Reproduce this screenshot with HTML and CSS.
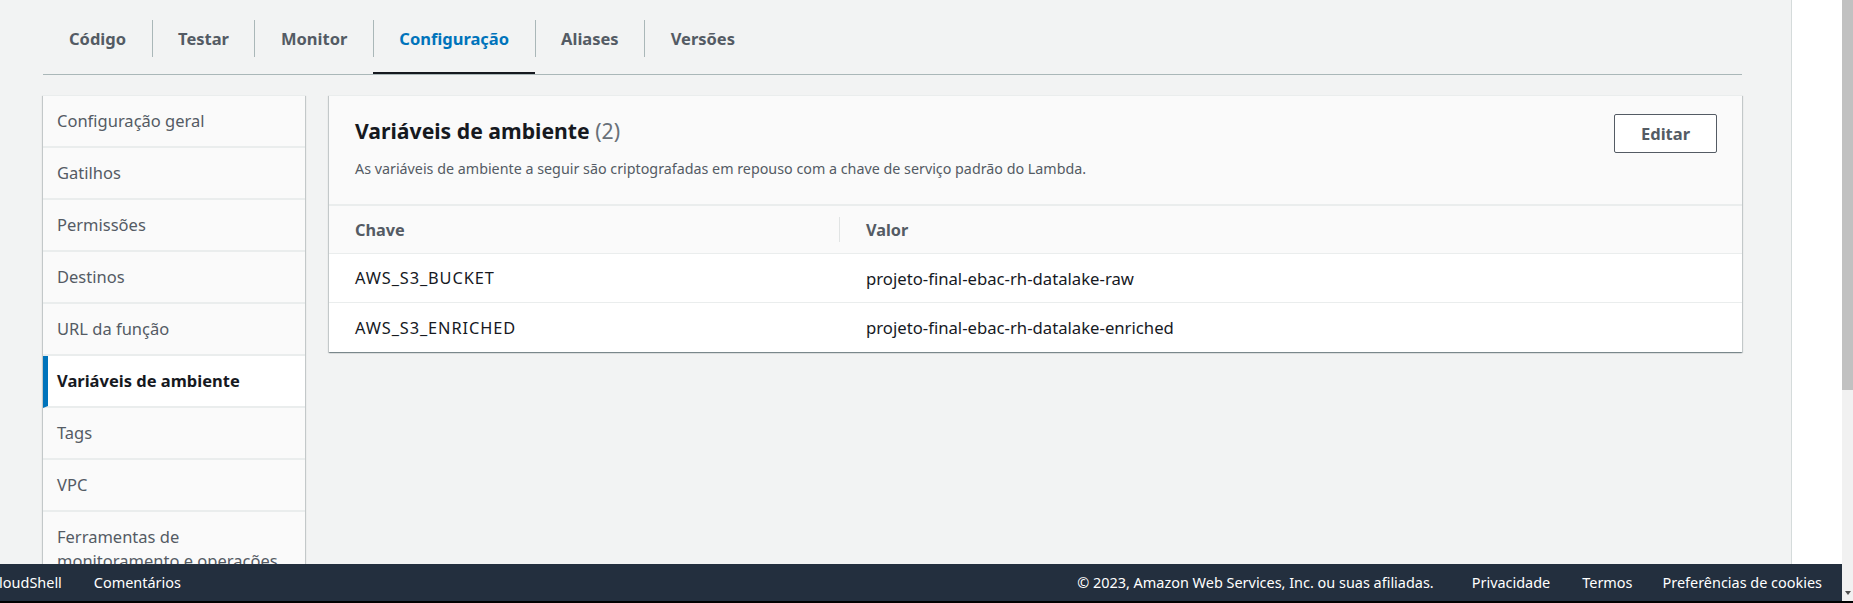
FILE: index.html
```html
<!DOCTYPE html>
<html lang="pt-BR">
<head>
<meta charset="utf-8">
<title>Lambda - Configuração</title>
<link rel="stylesheet" href="styles.css">
</head>
<body>
<div class="window">
  <div class="screen">
    <div class="viewport">
      <div class="main">
        <nav class="tabs">
          <div class="tab"><span class="tab-label">Código</span></div>
          <div class="tab"><span class="tab-label">Testar</span></div>
          <div class="tab"><span class="tab-label">Monitor</span></div>
          <div class="tab active"><span class="tab-label">Configuração</span></div>
          <div class="tab"><span class="tab-label">Aliases</span></div>
          <div class="tab"><span class="tab-label">Versões</span></div>
        </nav>
        <div class="content">
          <aside class="sidenav">
            <div class="nav-item">Configuração geral</div>
            <div class="nav-item">Gatilhos</div>
            <div class="nav-item">Permissões</div>
            <div class="nav-item">Destinos</div>
            <div class="nav-item">URL da função</div>
            <div class="nav-item active">Variáveis de ambiente</div>
            <div class="nav-item">Tags</div>
            <div class="nav-item">VPC</div>
            <div class="nav-item">Ferramentas de monitoramento e operações</div>
            <div class="nav-item">Simultaneidade</div>
          </aside>
          <section class="panel">
            <header class="panel-header">
              <div class="panel-heading">
                <h2 class="panel-title">Variáveis de ambiente <span class="count">(2)</span></h2>
                <p class="panel-desc">As variáveis de ambiente a seguir são criptografadas em repouso com a chave de serviço padrão do Lambda.</p>
              </div>
              <button class="btn" type="button">Editar</button>
            </header>
            <div class="table">
              <div class="th">Chave</div>
              <div class="th th-sep">Valor</div>
              <div class="td key">AWS_S3_BUCKET</div>
              <div class="td val">projeto-final-ebac-rh-datalake-raw</div>
              <div class="td key last">AWS_S3_ENRICHED</div>
              <div class="td val last">projeto-final-ebac-rh-datalake-enriched</div>
            </div>
          </section>
        </div>
      </div>
      <aside class="rail"></aside>
      <footer class="footer">
        <div class="footer-left">
          <span class="f-link cloudshell">CloudShell</span>
          <span class="f-link">Comentários</span>
        </div>
        <div class="footer-right">
          <span class="f-copy">© 2023, Amazon Web Services, Inc. ou suas afiliadas.</span>
          <span class="f-link">Privacidade</span>
          <span class="f-link">Termos</span>
          <span class="f-link f-cookies">Preferências de cookies</span>
        </div>
      </footer>
    </div>
    <div class="scrollbar">
      <div class="thumb"></div>
      <div class="track"><span class="arrow"></span></div>
    </div>
  </div>
  <div class="bottom-edge"></div>
</div>
</body>
</html>
```

FILE: styles.css
```css
* { box-sizing: border-box; }

html, body {
  margin: 0;
  padding: 0;
  width: 1853px;
  height: 603px;
  overflow: hidden;
}

body {
  font-family: "Noto Sans", "Open Sans", sans-serif;
  color: #16191f;
  background: #f2f3f3;
}

.window {
  display: flex;
  flex-direction: column;
  height: 603px;
}

.screen {
  display: flex;
  height: 601px;
}

.viewport {
  flex: 1;
  display: flex;
  position: relative;
  overflow: hidden;
  background: #f2f3f3;
}

.main {
  flex: 1;
  padding: 0 49px 0 43px;
}

/* Tabs */
.tabs {
  display: flex;
  border-bottom: 1px solid #aab7b8;
}

.tab {
  height: 74px;
  padding-top: 20px;
  font-size: 16.5px;
  font-weight: 700;
  color: #545b64;
}

.tab-label {
  display: flex;
  align-items: center;
  height: 37px;
  padding: 0 25.5px;
  border-left: 1px solid #aab7b8;
}

.tab:first-child .tab-label {
  border-left: none;
  padding-left: 26px;
}

.tab.active {
  color: #0073bb;
  border-bottom: 2px solid #16191f;
}

/* Content */
.content {
  display: flex;
  gap: 24px;
  margin-top: 20px;
  align-items: flex-start;
}

.sidenav {
  width: 262px;
  flex: none;
  background: #fafafa;
  border-top: 1px solid #eaeded;
  box-shadow: 0 1px 1px 0 rgba(0, 28, 36, 0.3), 1px 1px 1px 0 rgba(0, 28, 36, 0.15), -1px 1px 1px 0 rgba(0, 28, 36, 0.15);
}

.nav-item {
  padding: 13px 14px;
  min-height: 50px;
  line-height: 24px;
  font-size: 16.5px;
  color: #545b64;
  border-bottom: 2px solid #eaeded;
}

.nav-item.active {
  background: #fff;
  border-left: 5px solid #0073bb;
  padding-left: 9px;
  color: #16191f;
  font-weight: 700;
}

.panel {
  flex: 1;
  background: #fff;
  border-top: 1px solid #eaeded;
  box-shadow: 0 1px 1px 0 rgba(0, 28, 36, 0.3), 1px 1px 1px 0 rgba(0, 28, 36, 0.15), -1px 1px 1px 0 rgba(0, 28, 36, 0.15);
}

.panel-header {
  display: flex;
  justify-content: space-between;
  align-items: flex-start;
  height: 110px;
  padding: 18px 25px 0 26px;
  background: #fafafa;
  border-bottom: 2px solid #eaeded;
}

.panel-title {
  margin: 3px 0 0;
  font-size: 21.2px;
  line-height: 28px;
  font-weight: 700;
  color: #16191f;
}

.count {
  font-weight: 400;
  color: #687078;
}

.panel-desc {
  margin: 14px 0 0;
  font-size: 14.3px;
  line-height: 20px;
  color: #545b64;
}

.btn {
  width: 103px;
  height: 39px;
  border: 1px solid #545b64;
  border-radius: 2px;
  background: #fff;
  font-family: inherit;
  font-size: 16.5px;
  font-weight: 700;
  color: #545b64;
  padding: 0;
}

.table {
  display: grid;
  grid-template-columns: 510px 1fr;
}

.th {
  display: flex;
  align-items: center;
  height: 48px;
  padding-left: 26px;
  background: #fafafa;
  border-bottom: 1px solid #eaeded;
  font-size: 16.3px;
  font-weight: 700;
  color: #545b64;
}

.th-sep {
  padding-left: 0;
}

.th-sep::before {
  content: "";
  width: 1px;
  height: 25px;
  background: #e1e4e4;
  margin-right: 26px;
}

.td {
  display: flex;
  align-items: center;
  height: 49px;
  border-bottom: 1px solid #eaeded;
  font-size: 16.35px;
  color: #16191f;
}

.td.key {
  padding-left: 26px;
  letter-spacing: 0.9px;
}

.td.val {
  padding-left: 27px;
  font-size: 16.7px;
}

.td.last {
  border-bottom: none;
}

/* Right tools rail */
.rail {
  width: 51px;
  flex: none;
  background: #fff;
  border-left: 1px solid #d5dbdb;
}

/* Footer */
.footer {
  position: absolute;
  left: 0;
  right: 0;
  bottom: 0;
  height: 37px;
  display: flex;
  align-items: center;
  justify-content: space-between;
  padding-right: 20px;
  background: #232f3e;
  color: #fff;
  font-size: 14.45px;
}

.footer-left,
.footer-right {
  display: flex;
  align-items: center;
  gap: 32px;
  white-space: nowrap;
}

.cloudshell {
  margin-left: -10px;
}

.f-copy {
  margin-right: 6px;
}

.f-cookies {
  margin-left: -2px;
}

/* Scrollbar */
.scrollbar {
  width: 11px;
  flex: none;
  display: flex;
  flex-direction: column;
  background: #f1f1f1;
}

.thumb {
  height: 390px;
  background: #c1c1c1;
}

.track {
  flex: 1;
  display: flex;
  flex-direction: column;
  justify-content: flex-end;
  align-items: center;
  padding-bottom: 6px;
}

.arrow {
  width: 0;
  height: 0;
  border-left: 3px solid transparent;
  border-right: 3px solid transparent;
  border-top: 4px solid #505050;
}

.bottom-edge {
  height: 2px;
  background: #000;
}
```
